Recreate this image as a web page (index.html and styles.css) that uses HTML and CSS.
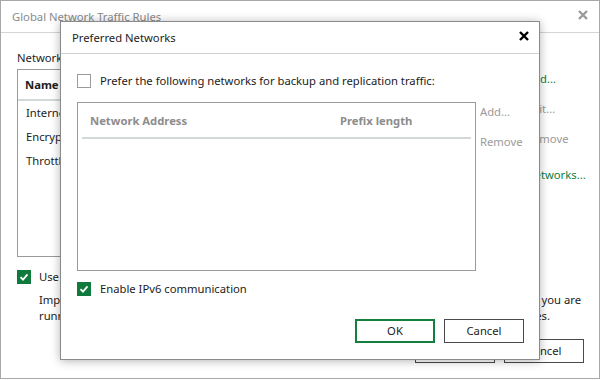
FILE: index.html
```html
<!DOCTYPE html>
<html>
<head>
<meta charset="utf-8">
<title>Preferred Networks</title>
<link rel="stylesheet" href="styles.css">
</head>
<body>
<div class="window">
  <div class="win-title">
    <span>Global Network Traffic Rules</span>
    <svg class="win-close" width="10" height="10" viewBox="0 0 10 10"><path d="M1 1L9 9M9 1L1 9" stroke="#9a9a9a" stroke-width="2.4"/></svg>
  </div>
  <div class="win-body">
    <div class="label">Network traffic rules:</div>
    <div class="main-row">
      <div class="rules">
        <div class="rules-head">Name</div>
        <div class="rules-row">Internet traffic</div>
        <div class="rules-row">Encryption</div>
        <div class="rules-row">Throttling</div>
      </div>
      <div class="side">
        <span class="link">Add...</span>
        <span class="disabled">Edit...</span>
        <span class="disabled">Remove</span>
        <span class="link networks">Networks...</span>
      </div>
    </div>
    <div class="check-row use-row">
      <span class="cb checked"><svg width="14" height="14" viewBox="0 0 14 14"><path d="M3.5 7.2L6 9.7L10.5 4.3" fill="none" stroke="#fff" stroke-width="1.8"/></svg></span>
      <span>Use streams</span>
    </div>
    <div class="para">
      <div class="pline l1"><span>Improves</span><span>you are</span></div>
      <div class="pline l2"><span>running</span><span>processes.</span></div>
    </div>
    <div class="buttons">
      <button class="btn">OK</button>
      <button class="btn">Cancel</button>
    </div>
  </div>

  <div class="dialog">
    <div class="dlg-title">
      <span>Preferred Networks</span>
      <svg class="dlg-close" width="10" height="10" viewBox="0 0 10 10"><path d="M1 1L9 9M9 1L1 9" stroke="#000" stroke-width="2.4"/></svg>
    </div>
    <div class="dlg-body">
      <div class="check-row">
        <span class="cb"></span>
        <span>Prefer the following networks for backup and replication traffic:</span>
      </div>
      <div class="list-row">
        <div class="netlist">
          <div class="netlist-head">
            <span class="col-addr">Network Address</span>
            <span class="col-prefix">Prefix length</span>
          </div>
        </div>
        <div class="side inner-side">
          <span class="disabled">Add...</span>
          <span class="disabled">Remove</span>
        </div>
      </div>
      <div class="check-row ipv6">
        <span class="cb checked"><svg width="14" height="14" viewBox="0 0 14 14"><path d="M3.5 7.2L6 9.7L10.5 4.3" fill="none" stroke="#fff" stroke-width="1.8"/></svg></span>
        <span>Enable IPv6 communication</span>
      </div>
      <div class="buttons dlg-buttons">
        <button class="btn primary">OK</button>
        <button class="btn">Cancel</button>
      </div>
    </div>
  </div>
</div>
</body>
</html>
```
FILE: styles.css
```css
* { box-sizing: border-box; }
html, body { margin: 0; padding: 0; }
body {
  width: 600px;
  height: 380px;
  overflow: hidden;
  background: #fff;
  font-family: "Noto Sans", "Liberation Sans", sans-serif;
  font-size: 11.25px;
  color: #1c1c1c;
}
.window {
  position: relative;
  width: 600px;
  height: 379px;
  border: 1px solid #a8a8a8;
  background: #fff;
  display: flex;
  flex-direction: column;
}
.win-title {
  flex: none;
  height: 32px;
  border-bottom: 1px solid #d4d4d4;
  display: flex;
  align-items: center;
  justify-content: space-between;
  padding: 0 11px 0 11px;
  color: #8a8a8a;
}
.win-close { margin-top: -3px; }
.win-body {
  flex: 1;
  display: flex;
  flex-direction: column;
  padding: 17px 15px 15px 16px;
}
.label { line-height: 16px; }
.main-row {
  display: flex;
  gap: 9px;
  margin-top: 3px;
}
.rules {
  flex: 1;
  height: 188px;
  border: 1px solid #9a9a9a;
}
.rules-head {
  height: 31px;
  border-bottom: 2px solid #d3d8d8;
  padding: 7px 0 0 7px;
  line-height: 16px;
  font-weight: bold;
}
.rules-row {
  height: 24px;
  line-height: 24px;
  padding-left: 8px;
}
.side {
  flex: none;
  width: 58px;
  display: flex;
  flex-direction: column;
  padding-top: 2px;
}
.side span {
  height: 30px;
  line-height: 16px;
  white-space: nowrap;
}
.side .networks { margin-top: 6px; }
.link { color: #0e7d3c; }
.disabled { color: #9a9a9a; }

.check-row {
  display: flex;
  align-items: center;
  gap: 9px;
  height: 14px;
  line-height: 14px;
  white-space: nowrap;
}
.use-row { margin-top: 13px; gap: 8px; }
.cb {
  flex: none;
  width: 14px;
  height: 14px;
  border: 1px solid #9a9a9a;
  background: #fff;
  display: flex;
}
.cb.checked {
  border: none;
  background: #0f7a3b;
}
.para {
  margin: 8px 0 0 22px;
}
.pline {
  display: flex;
  justify-content: space-between;
  line-height: 16px;
  white-space: nowrap;
}
.pline.l1 { margin-right: 3px; }
.pline.l2 { margin-right: 34px; }

.buttons {
  margin-top: auto;
  display: flex;
  justify-content: flex-end;
  gap: 9px;
}
.btn {
  width: 80px;
  height: 24px;
  padding: 0;
  border: 1px solid #4a4a4a;
  background: #fff;
  font-family: inherit;
  font-size: inherit;
  color: #1c1c1c;
  line-height: 20px;
}
.btn.primary { border: 2px solid #13803e; }

.dialog {
  position: absolute;
  left: 59px;
  top: 20px;
  width: 480px;
  height: 339px;
  border: 1px solid #8a8a8a;
  background: #fff;
  box-shadow: 0 1px 9px rgba(0, 0, 0, 0.3);
  display: flex;
  flex-direction: column;
}
.dlg-title {
  flex: none;
  height: 32px;
  border-bottom: 1px solid #d0d0d0;
  display: flex;
  align-items: center;
  justify-content: space-between;
  padding: 0 10px 0 11px;
}
.dlg-close { margin-top: -3px; }
.dlg-body {
  flex: 1;
  display: flex;
  flex-direction: column;
  padding: 20px 15px 16px 16px;
}
.list-row {
  display: flex;
  gap: 4px;
  margin-top: 14px;
}
.netlist {
  flex: none;
  width: 399px;
  height: 169px;
  border: 1px solid #9a9a9a;
}
.netlist-head {
  display: flex;
  height: 36px;
  margin: 0 4px;
  padding: 10px 0 0 8px;
  border-bottom: 2px solid #d3d8d8;
  line-height: 16px;
  font-weight: bold;
  color: #8c8c8c;
}
.col-addr { width: 250px; }
.inner-side { width: 43px; }
.ipv6 { margin-top: 11px; }
```
